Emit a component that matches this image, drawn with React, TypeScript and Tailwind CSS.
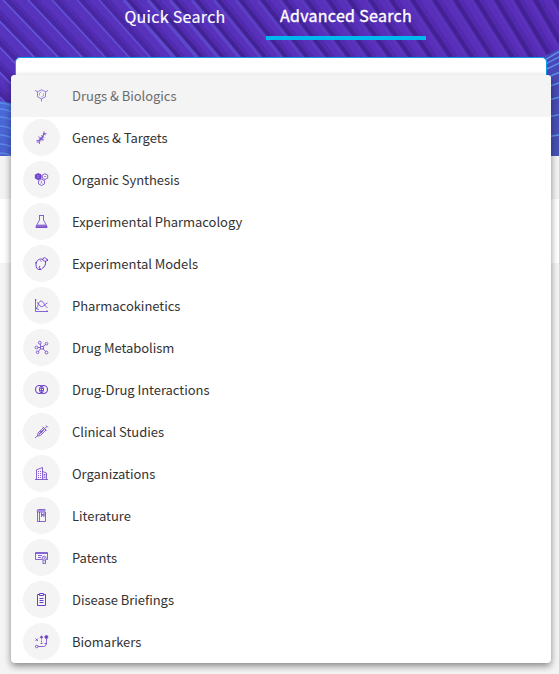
import * as React from 'react';

// x of every ridge at the top edge of the header
const ridges = [
  -94, -70, -46, -21, 3, 28, 52, 77, 99, 124, 148, 170, 192, 214, 236, 258, 280, 302, 324, 345,
  366, 387, 408, 430, 451, 472, 492, 512, 531, 551,
];

const icons = {
  drugs: (
    <>
      <path d="M6.5.8L10.500 2.800v5L6.500 9.800 2.500 7.800v-5zM2.500 2.800L0 1.500M10.500 2.800L13 1.500M6.500 9.800V12.500" strokeWidth="1" />
      <path d="M4.500 6.500V4l2-1M8.500 4.500v2.300l-2 1" strokeWidth=".7" />
    </>
  ),
  genes: (
    <path d="M1.500 9.500c4 0 6-1 6.200-3.500S8 2.500 11.500 2.500M4.500 13c-.700-3-.500-4.500 1.500-6s3.500-2.500 3-6.500M1.500 11h3M4.500 9l1.500 1.500M5 6.500l3 2M6 4.500l3.300 2.200M8 1.800l2.700 2.400M4 5.500c-.500 2 3 4.500 5 3" />
  ),
  organic: (
    <>
      <path d="M3.200 .5L6.100 1.800v3.400l-2.900 1.500L.3 5.200V1.800z" fill="currentColor" />
      <path d="M10 .700l2.700 1.400v3L10 6.500 7.300 5.100v-3zM6.500 6.200l3 1.500v3.200l-3 1.600-3-1.600V7.700z" />
      <path d="M6.500 8v1.500l-1 1M6.500 9.500l1 1M9 3l1 1 1-1" strokeWidth=".6" />
      <path d="M2 2.800h2.400M2 4.300h2.400" stroke="#b9a3e5" strokeWidth=".7" />
    </>
  ),
  flask: (
    <>
      <path d="M4 .5h5M4.500 .500V5L1 11.500v1h11v-1L8.500 5V.500" />
      <path d="M2.300 10h8.400l1.200 2.300H1.100z" fill="currentColor" opacity=".75" />
    </>
  ),
  mouse: (
    <path
      d="M8 2.500C4.500 1 1 3.500 1 7.500c0 3 1 4.500 2.500 5h3M8 2.500c0-2 2.500-2.500 3-.800l2 1.300c-.500.800-1.500 1-2.500 1 .500 3-.500 6-3.500 7.500M8 2.500c0 1.200.800 1.800 1.800 1.500M6 12c-2 0-2.500-1.500-1-3M0 5.800h1.700M5.500 3.500l.700 1"
      strokeWidth="1"
    />
  ),
  chart: (
    <path d="M.5 0v12.500H13M1 9.500c2.500-1 2-7.500 5-7.500S9 7.500 12.500 8.500M2 3.500c1.500 0 2 4 4.500 4.200S10 4.500 12.500 4M1 9.500l3 1M0 1h1.600M12 11.400v1.600" />
  ),
  metabolism: (
    <>
      <path d="M5.500 5.500h3v2.500h-3zM5.800 5.500L5.200 3M8 5.400l2.600-1.800M5.500 6.500H3M8 7.800l2.700 2.700M5.500 7.800l-2 2.500" />
      <circle cx="4.800" cy="1.700" r="1.400" /><circle cx="11.500" cy="2.700" r="1.300" /><circle cx="1.500" cy="6.500" r="1.400" />
      <circle cx="2.600" cy="11.300" r="1.300" /><circle cx="11.500" cy="11.500" r="1.400" />
    </>
  ),
  interactions: (
    <>
      <circle cx="4.500" cy="6.500" r="4" strokeWidth="1.100" /><circle cx="8.500" cy="6.500" r="4" strokeWidth="1.100" />
      <path d="M6.500 3.200v6.600M5 5.500h3M5 7.500h3" />
    </>
  ),
  syringe: (
    <>
      <path d="M0 13l3-2.500M2.500 11l.5-3L8.500 2.500 11 5l-5.500 5.500zM9.800 3.500L12 1.200M11 .5l2 2M7.500 1.700l4 4" />
      <path d="M4 9.300l5-5M5.500 6l1.500 1.500" strokeWidth="1.200" />
    </>
  ),
  building: (
    <path d="M0 12.500h13M1.500 12.300V2.800L7.500.5v11.800M7.500 4.500l4 1.500v6.300M3 4.500h1M5 4.500h1M3 6.500h1M5 6.500h1M3 8.500h1M5 8.500h1M3 10.500h1M5 10.500h1M8.500 7.500h2M8.500 9h2M8.500 10.700h2" />
  ),
  book: (
    <path d="M2.500 3v9.500h8V3zM2.500 3C1.800 1.500 2.300.5 3.300.5h7M3 1.800h7.500M4.500 3v9.500M6.500 3.500v4l1.300-1 1.300 1v-4M6.500 5.500h2.600" />
  ),
  patent: (
    <>
      <path d="M7 8.500H.5v-7h12v7h-1.200M.5 2.500h12M3 4.500h4M3 6.500h3" />
      <circle cx="9.200" cy="7.200" r="2" />
      <path d="M8 9v3.800l1.200-.8 1.300.8V9M8.500 7.200h1.500" />
    </>
  ),
  clipboard: (
    <path d="M4 1.500H2.500v11h8v-11H9M4.500.5h4v2h-4zM4.500 5.500h4M4.500 7.500h4M4.500 9.500h4" strokeWidth="1" />
  ),
  biomarkers: (
    <>
      <path d="M.5 3.500l2.500 2.500M3 3.500L.5 6M3 11.500h5.500c2.500 0 3-1.500 3-7.500M9.500 8.500h2.500M5.500 8.500h2" />
      <path d="M6.500 2.500v6.200" strokeDasharray="2 1" />
      <path d="M5.200 2.500L6.500.8l1.300 1.700z" fill="currentColor" />
      <circle cx="1.700" cy="11.500" r="1.300" /><circle cx="11.400" cy="2" r="1.500" fill="currentColor" />
    </>
  ),
};

const categories = [
  { label: 'Drugs & Biologics', icon: icons.drugs },
  { label: 'Genes & Targets', icon: icons.genes },
  { label: 'Organic Synthesis', icon: icons.organic },
  { label: 'Experimental Pharmacology', icon: icons.flask },
  { label: 'Experimental Models', icon: icons.mouse },
  { label: 'Pharmacokinetics', icon: icons.chart },
  { label: 'Drug Metabolism', icon: icons.metabolism },
  { label: 'Drug-Drug Interactions', icon: icons.interactions },
  { label: 'Clinical Studies', icon: icons.syringe },
  { label: 'Organizations', icon: icons.building },
  { label: 'Literature', icon: icons.book },
  { label: 'Patents', icon: icons.patent },
  { label: 'Disease Briefings', icon: icons.clipboard },
  { label: 'Biomarkers', icon: icons.biomarkers },
];

function HeaderArt() {
  return (
    <svg className="absolute inset-0 h-full w-full" viewBox="0 0 559 156">
      <defs>
        <linearGradient id="base" x1="0" x2="1">
          <stop offset="0" stopColor="#5734bd" />
          <stop offset="1" stopColor="#5a2db8" />
        </linearGradient>
        <linearGradient id="wave" x1="0" y1="0" x2="0" y2="1">
          <stop offset="0" stopColor="#4a6cdc" />
          <stop offset="1" stopColor="#4a5fd0" />
        </linearGradient>
        <linearGradient id="waveRight" x1="0" y1="0" x2="0" y2="1">
          <stop offset="0" stopColor="#4a45b8" />
          <stop offset="1" stopColor="#4652b4" />
        </linearGradient>
      </defs>
      <rect width="559" height="156" fill="url(#base)" />
      {ridges.map((x) => {
        const dx = 110 - Math.max(x, 0) * 0.082;
        const lit = Math.max(0.1, 0.8 - Math.max(x, 0) / 480);
        return (
          <g key={x}>
            <path d={`M${x + 1} 0l${dx} 114h11L${x + 12} 0z`} fill="#43239a" opacity=".35" />
            <path d={`M${x + 2} 0l${dx} 114h5L${x + 7} 0z`} fill="#3a1c82" opacity={x < 110 ? 0.3 : 0.6} />
            <path d={`M${x} 0l${dx} 114`} stroke="#6560e0" strokeWidth={x < 110 ? 1.6 : 3.5} opacity={lit} />
          </g>
        );
      })}
      <path d="M0 101L16 104V156H0z" fill="url(#wave)" />
      <path d="M538 59l21-10v107h-21z" fill="url(#waveRight)" />
      {[103, 109, 117, 126, 135, 144, 153].map((y) => (
        <path key={y} d={`M0 ${y}q6 0 14 4`} stroke="#68a2f2" strokeWidth="1.6" fill="none" opacity=".6" />
      ))}
      {[54, 59, 65, 74, 84, 98, 115, 135].map((y, i) => (
        <path key={y} d={`M538 ${y + 10 - i}L560 ${y - 3 + i * 0.4}`} stroke="#5c93ec" strokeWidth="1.4" />
      ))}
    </svg>
  );
}

export default function App() {
  return (
    <div className="relative h-[674px] w-[559px] overflow-hidden bg-[#f4f4f4] font-['Noto_Sans_CJK_SC',sans-serif]">
      <header className="relative h-[156px] overflow-hidden">
        <HeaderArt />
        <nav className="relative flex h-10 pl-[110px] text-white">
          <button className="h-10 w-[130px] pb-2 text-[16px] leading-[30px] tracking-[0.3px] [-webkit-text-stroke:0.15px_white]">
            Quick Search
          </button>
          <button className="ml-[26px] h-10 w-[160px] border-b-4 border-[#00b8f0] pb-1.5 text-[16px] leading-[30px] tracking-[0.3px] [-webkit-text-stroke:0.35px_white]">
            Advanced Search
          </button>
        </nav>
        <div className="relative mt-[17px] ml-[15px] h-10 w-[532px] rounded-[5px] border border-[#0b9de8] bg-white" />
      </header>
      <div className="h-[43px] bg-[#f3f3f3]" />
      <div className="h-16 bg-white" />

      {/* Category menu */}
      <ul className="absolute top-[75px] left-[11px] w-[540px] overflow-hidden rounded bg-white shadow-[0_3px_7px_rgba(0,0,0,0.45)]">
        {categories.map((c, i) => (
          <li
            key={c.label}
            className={`flex h-[42px] items-center pb-px pl-3 text-[13px] ${i === 0 ? 'bg-[#f4f4f4] text-[#6c6c6c]' : 'text-[#333]'}`}
          >
            <span
              className={`flex h-[37px] w-[37px] items-center justify-center rounded-full bg-[#f4f4f4] ${i === 0 ? 'text-[#957adf]' : 'text-[#6b3fcb]'}`}
            >
              <svg width="13" height="13" viewBox="0 0 13 13" fill="none" stroke="currentColor" strokeWidth=".8" className="overflow-visible">
                {c.icon}
              </svg>
            </span>
            <span className="ml-3 pt-px leading-[19.5px] tracking-[-0.04px]">{c.label}</span>
          </li>
        ))}
      </ul>
    </div>
  );
}
